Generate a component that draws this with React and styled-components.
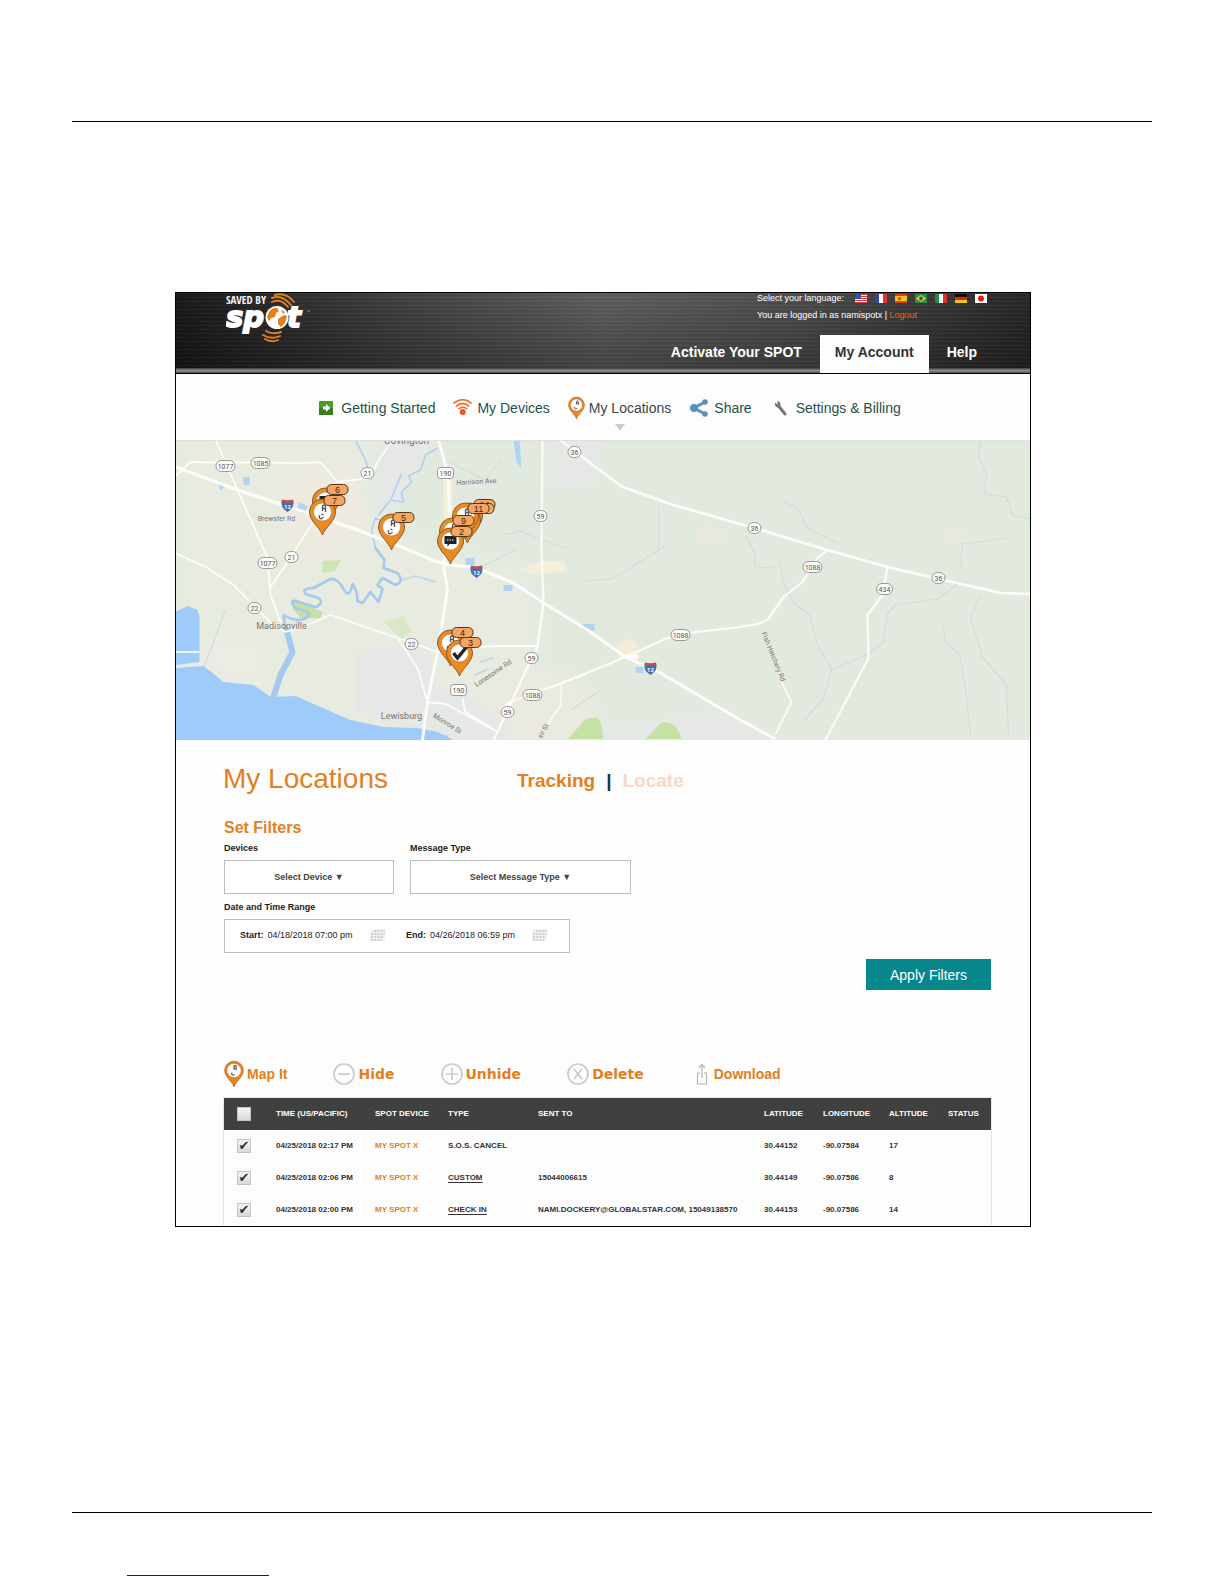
import React from "react";
import styled, { createGlobalStyle, css } from "styled-components";

const orange = "#e2801f";
const sans = `"Liberation Sans", Arial, sans-serif`;

const GlobalStyle = createGlobalStyle`
  *, *::before, *::after { box-sizing: border-box; }
  body { margin: 0; background: #fff; font-family: ${sans}; color: #222; }
  a { text-decoration: none; color: inherit; }
  svg { display: block; }
`;

/* ---------- page ---------- */
const Page = styled.div`
  padding: 121px 72px 8px;
`;
const Rule = styled.hr`
  margin: 0;
  border: 0;
  height: 1px;
  background: #000;
`;
const FooterLine = styled.div`
  width: 142px;
  height: 1px;
  margin: 62px 0 0 55px;
  background: #1a1280;
`;
const Frame = styled.div`
  margin: 170px 121px 285px 103px;
  border: 1px solid #000;
  background: #fdfdfd;
  overflow: hidden;
`;

/* ---------- header ---------- */
const Header = styled.header`
  display: flex;
  justify-content: space-between;
  height: 81px;
  padding: 0 38px 0 50px;
  border-bottom: 1px solid #000;
  background:
    linear-gradient(#3c3c3c, #8d8d8d 50%, #555) bottom / 100% 5px no-repeat,
    repeating-linear-gradient(rgba(255, 255, 255, 0.03) 0 1px, rgba(0, 0, 0, 0.05) 1px 3px, transparent 3px 4px),
    linear-gradient(rgba(0, 0, 0, 0.05), rgba(0, 0, 0, 0.35)),
    linear-gradient(90deg, #1c1c1c, #454545 25%, #666 50%, #555 72%, #2c2c2c);
`;
const HeaderSide = styled.div`
  display: flex;
  flex-direction: column;
  justify-content: space-between;
  align-items: flex-end;
`;
const Account = styled.div`
  display: flex;
  flex-direction: column;
  gap: 7px;
  padding-right: 5px;
  color: #fff;
  font-size: 9px;
  line-height: 10px;
`;
const Languages = styled.div`
  display: flex;
  align-items: center;
  gap: 8px;
`;
const LanguageLabel = styled.span`
  min-width: 90px;
`;
const Flag = styled.button`
  width: 12px;
  height: 9px;
  padding: 0;
  border: 0;
  background: none;
`;
const LogoutLink = styled.a`
  color: #e8641b;
`;
const Tabs = styled.nav`
  display: flex;
  gap: 3px;
`;
const Tab = styled.a`
  height: 38px;
  padding: 0 15px;
  font-size: 14px;
  font-weight: bold;
  line-height: 34px;
  color: ${(p) => (p.$active ? "#333" : "#fff")};
  background: ${(p) => (p.$active ? "#fdfdfd" : "transparent")};
`;

/* ---------- sub navigation ---------- */
const SubNav = styled.nav`
  display: flex;
  justify-content: center;
  align-items: center;
  gap: 18px;
  height: 66px;
  padding: 2px 0 0 12px;
`;
const SubLink = styled.a`
  position: relative;
  display: flex;
  align-items: center;
  gap: 4px;
  font-size: 14px;
  line-height: 24px;
  color: ${(p) => (p.$active ? "#444" : "#24514c")};
  ${(p) =>
    p.$active &&
    css`
      &::after {
        content: "";
        position: absolute;
        left: calc(50% - 5px);
        top: 28px;
        border: 5px solid transparent;
        border-top: 7px solid #ccc;
        border-bottom: 0;
      }
    `}
`;
const MapBox = styled.div`
  height: 300px;
  svg { width: 100%; height: 100%; }
`;

/* ---------- filters ---------- */
const Main = styled.main`
  padding: 23px 39px 0 48px;
`;
const TitleRow = styled.div`
  display: flex;
  align-items: center;
  margin-left: -1px;
`;
const Title = styled.h1`
  width: 294px;
  margin: 0;
  font-size: 28px;
  font-weight: normal;
  line-height: 32px;
  color: ${orange};
`;
const Modes = styled.div`
  display: flex;
  gap: 11px;
  padding-top: 4px;
  font-size: 19px;
  font-weight: bold;
  line-height: 24px;
  color: #12353f;
`;
const Mode = styled.a`
  color: ${(p) => (p.$muted ? "#f6d9c6" : orange)};
`;
const Filters = styled.form`
  display: flex;
  flex-direction: column;
`;
const SubTitle = styled.h2`
  margin: 23px 0 4px;
  font-size: 16px;
  line-height: 20px;
  color: ${orange};
`;
const FilterRow = styled.div`
  display: flex;
  gap: 16px;
  margin-bottom: 7px;
`;
const Field = styled.div`
  display: flex;
  flex-direction: column;
  gap: 6px;
  width: ${(p) => p.$width}px;
`;
const Label = styled.label`
  font-size: 9px;
  font-weight: bold;
  line-height: 12px;
  color: #1c1c1c;
`;
const Select = styled.select`
  appearance: none;
  height: 34px;
  border: 1px solid #bdbdbd;
  border-radius: 0;
  background: #fff;
  font: bold 9px/12px ${sans};
  color: #444;
  text-align: center;
  text-align-last: center;
`;
const Range = styled.div`
  display: flex;
  align-items: center;
  justify-content: space-between;
  height: 34px;
  padding: 0 19px 2px 15px;
  border: 1px solid #bdbdbd;
  background: #fff;
`;
const DateField = styled.div`
  display: flex;
  align-items: center;
  gap: 4px;
`;
const DateInput = styled.input`
  width: 98px;
  padding: 0;
  border: 0;
  background: none;
  font: 9px/12px ${sans};
  color: #222;
`;
const Apply = styled.button`
  align-self: flex-end;
  width: 125px;
  height: 31px;
  margin-top: -1px;
  padding: 0;
  border: 0;
  background: #07868c;
  font: 14px/32px ${sans};
  color: #fff;
`;

/* ---------- table ---------- */
const Toolbar = styled.div`
  display: flex;
  align-items: center;
  gap: 46px;
  height: 28px;
  margin: 70px 0 10px;
`;
const Action = styled.button`
  display: flex;
  align-items: center;
  gap: 3px;
  padding: 0;
  border: 0;
  background: none;
  font: bold 14px/18px ${(p) => (p.$wide ? `"DejaVu Sans", Verdana, sans-serif` : sans)};
  color: ${orange};
`;
const Table = styled.table`
  width: 100%;
  table-layout: fixed;
  border-collapse: collapse;
  box-shadow: 0 0 0 1px #e6e6e6;
  font-size: 8px;
  font-weight: bold;
  color: #333;
`;
const Col = styled.col`
  width: ${(p) => (p.$width ? `${p.$width}px` : "auto")};
`;
const Row = styled.tr`
  height: 32px;
  background: ${(p) => (p.$head ? "#404040" : "transparent")};
  color: ${(p) => (p.$head ? "#fff" : "inherit")};
`;
const cell = css`
  padding: 0;
  text-align: left;
  white-space: nowrap;
  line-height: 12px;
`;
const Th = styled.th`
  ${cell}
`;
const Td = styled.td`
  ${cell}
  color: ${(p) => (p.$accent ? orange : "inherit")};
`;
const TypeLink = styled.a`
  text-decoration: underline;
  text-underline-offset: 2px;
`;
const Check = styled.input`
  appearance: none;
  display: grid;
  place-items: center;
  width: 14px;
  height: 14px;
  margin: 0 0 0 13px;
  border: 1px solid #c4c4c4;
  background: linear-gradient(#f3f3f3, #dadada);
  &:checked::before {
    content: "✔";
    font: 13px/12px "DejaVu Sans", sans-serif;
    color: #333;
  }
`;

/* ---------- drawings ---------- */
function Logo() {
  return (
    <svg width="86" height="51" viewBox="0 0 86 51" role="img" aria-label="Saved by Spot">
      <g fill="none" stroke={orange} strokeWidth="1.9" strokeLinecap="round">
        <path d="M46 5Q56 1 65 12M49 2Q60 -1 68 9M46 9Q55 5 62 14" />
        <path d="M37 42Q45 47 54 43M39 46Q45 50 52 47M40 38Q46 42 55 39" />
      </g>
      <text x="0" y="11" fill="#f4f4f4" fontSize="11" fontWeight="bold" fontFamily="'Liberation Sans Narrow', 'Open Sans Condensed', 'Open Sans', sans-serif">
        SAVED BY
      </text>
      <g fill="#fff" stroke="#fff" strokeWidth="1.8" fontFamily="'DejaVu Sans', Verdana, sans-serif" fontSize="29" fontWeight="bold" fontStyle="italic">
        <text x="0" y="34">sp</text>
        <text x="61" y="34">t</text>
      </g>
      <circle cx="51" cy="24.500" r="11.500" fill="#fff" />
      <path d="M43 19q4-5 8-4l2 3-3 2-1 4-4 1-2 3-2-4zM52 26l6-4 3 1-2 7-4 4-3-3zM55 17l4 2-2 2z" fill={orange} />
      <text x="80" y="20" fontSize="4" fill="#aaa" fontFamily={sans}>™</text>
    </svg>
  );
}

const flags = [
  ["English", <><path fill="#eee" d="M0 0h12v9H0z" /><path stroke="#d0404a" strokeWidth="1" d="M0 .5h12M0 2.500h12M0 4.500h12M0 6.500h12M0 8.500h12" /><path fill="#3d4f9c" d="M0 0h6v5H0z" /></>],
  ["Français", <><path fill="#fff" d="M0 0h12v9H0z" /><path fill="#33479b" d="M0 0h4v9H0z" /><path fill="#e0332e" d="M8 0h4v9H8z" /></>],
  ["Español", <><path fill="#f5c31c" d="M0 0h12v9H0z" /><path fill="#d8402a" d="M0 0h12v2H0zM0 7h12v2H0zM3 3.500h3v2.500H3z" /></>],
  ["Português", <><path fill="#2a9140" d="M0 0h12v9H0z" /><path fill="#f0d42c" d="M6 1l5 3.500L6 8 1 4.500z" /><circle cx="6" cy="4.500" r="2" fill="#2f4f94" /></>],
  ["Italiano", <><path fill="#fff" d="M0 0h12v9H0z" /><path fill="#228a43" d="M0 0h4v9H0z" /><path fill="#d8342f" d="M8 0h4v9H8z" /></>],
  ["Deutsch", <><path fill="#111" d="M0 0h12v3H0z" /><path fill="#d8281c" d="M0 3h12v3H0z" /><path fill="#f3c518" d="M0 6h12v3H0z" /></>],
  ["日本語", <><path fill="#fff" d="M0 0h12v9H0z" /><circle cx="6" cy="4.500" r="3" fill="#e01d1d" /></>],
];

/* Origin is the centre of the pin's head; the tip sits 23 units below. */
function PinShape({ kind = "spot" }) {
  return (
    <>
      <path d="M0 23C-2 16 -13 9 -13 0a13 13 0 0 1 26 0C13 9 2 16 0 23z" fill="#ea8a22" stroke="#8b5a22" strokeWidth="1" />
      <circle r="9" fill="#fff" stroke="#b9793a" strokeWidth=".6" />
      {kind === "spot" && (
        <g fill="none" stroke="#555" strokeWidth="1.300">
          <path d="M0-1V-6q2-2 3 0V0M0-3.500h3" />
          <path d="M-3 3v3q2 2 4-1M-1 2l2 1" />
        </g>
      )}
      {kind === "message" && (
        <>
          <path d="M-6-5H6V3H-1L-3 6V3H-6z" fill="#222" />
          <path d="M-3.500-1h7" stroke="#fff" strokeWidth="1.200" strokeDasharray="1.500 1" />
        </>
      )}
      {kind === "check" && <path d="M-6 0L-2 5 7-6" fill="none" stroke="#262626" strokeWidth="3.500" />}
    </>
  );
}

function PinIcon({ width, height }) {
  return (
    <svg width={width} height={height} viewBox="-14 -14 28 38" aria-hidden="true">
      <path d="M0 23C-2 16 -13 9 -13 0a13 13 0 0 1 26 0C13 9 2 16 0 23z" fill="#e5842a" stroke="#a8641f" />
      <circle r="9.500" fill="#fff" />
      <path d="M0-1V-6q2-2 3 0V0M0-3h3M-3 3v3q2 2 4-1" fill="none" stroke="#555" strokeWidth="1.600" />
    </svg>
  );
}

const pins = [
  { x: 150, y: 61, badge: [152, 44, "6"], kind: "message" },
  { x: 147, y: 72, badge: [149, 55, "7"] },
  { x: 216, y: 87, badge: [218, 72, "5"] },
  { x: 294, y: 76, badge: [299, 59, "14"] },
  { x: 292, y: 80, badge: [298, 63, "13"] },
  { x: 290, y: 76, badge: [293, 63, "11"] },
  { x: 277, y: 91, badge: [278, 75, "9"] },
  { x: 275, y: 101, badge: [276, 86, "2"], kind: "message" },
  { x: 275, y: 203, badge: [277, 187, "4"] },
  { x: 284, y: 213, badge: [285, 197, "3"], kind: "check" },
];

const shields = [
  [50, 26, "1077"], [85, 23, "1085"], [192, 33, "21"], [270, 33, "190"], [92, 123, "1077"], [116, 117, "21"],
  [79, 168, "22"], [236, 204, "22"], [399, 12, "36"], [365, 76, "59"], [356, 218, "59"], [357, 255, "1088"],
  [332, 272, "59"], [283, 250, "190"], [505, 195, "1088"], [579, 88, "36"], [637, 127, "1088"], [709, 149, "434"],
  [763, 138, "36"],
];

const interstates = [[112, 65], [301, 131], [475, 228]];

function LocationMap() {
  return (
    <svg viewBox="0 0 855 300" preserveAspectRatio="xMidYMid slice" role="img" aria-label="Map of locations">
      <defs>
        <filter id="soft" x="-20%" y="-20%" width="140%" height="140%"><feGaussianBlur stdDeviation="7" /></filter>
      </defs>
      <rect width="855" height="300" fill="#e2eadf" />
      <g filter="url(#soft)">
        <path d="M0 0H200L190 60 260 110 360 130 362 215 330 300H0z" fill="#e7ebe0" />
        <path d="M120 30h60l10 60-40 30-50-20z" fill="#efeae0" />
        <path d="M330 220l70 20 20 30-30 30h-80z" fill="#ebeae0" />
        <path d="M30 200h60v40H40z" fill="#ebece4" />
      </g>
      <g fill="#e6e8e6">
        <path d="M205 0H250L240 30 228 50 215 78 200 70 203 30z" />
        <path d="M371 0h54v42l-40 6-14-4z" />
        <path d="M180 212l70-8 12 40 30 12 45 30-10 14H250l-70-30z" />
        <path d="M545 272l55 27H390l40-14z" />
      </g>
      <g fill="#f3efd8">
        <path d="M342 130l25-9 22 0 2 10-26 4z" />
        <path d="M268 36h9v42h-9z" />
      </g>
      <path d="M443 205q12-12 18 0l1 14-18-2z" fill="#f4ecd4" />
      <ellipse cx="535" cy="95" rx="15" ry="9" fill="#e8e8de" />
      <ellipse cx="777" cy="94" rx="10" ry="7" fill="#e7e9de" />
      <g fill="#c5e2a3">
        <path d="M392 299l13-14q4-8 11-7 8-2 10 8l2 13z" />
        <path d="M470 299l9-9q6-10 14-7 8 0 13 16z" />
        <path d="M117 161l10 2 20 9-2 6-20 0-8-10z" />
        <path d="M147 121l19-1-7 11-12 2z" opacity=".7" />
        <path d="M208 182l20-6 8 16-10 6z" opacity=".45" />
      </g>

      <g fill="none" stroke="#d1dddd" strokeWidth="1.200">
        <path d="M571 95l8 18 1 14 18 1M608 62l14 6 10 20 30 15M605 125l3 18 10 20 16 12 8 30 14 24-8 30-20 22M655 230l38-16 15-12 4-28 10-12M805 0l-2 16 8 20-2 18 22 3 6 18 18 4M785 130l2-26 45-6M768 188l2 14 14 12 6 36 5 46M805 155l-10 22 12 40 24 28 2 50M722 165l40-6 20-15M407 141l30-2 40-25 12-8M330 95l14-4 20 8 30 10M20 250l30-80M270 20l40 20 15-20M395 270l30-20" />
        <path d="M483 68v42M340 110l-40 20" />
      </g>

      <g fill="#9fcbfb">
        <path d="M0 172L12 166 22 170 24 177V222L0 225z" />
        <path d="M0 228L28 226 36 232 48 242 78 245 95 257 120 256 145 267 175 280 208 287 242 288 262 292 278 300H0z" />
        <path d="M68 37h6v8h-6zM43 44l6 3-4 3zM124 62l8 4-3 8-8-3zM290 118h9v7h-9zM328 145h9v6h-9zM407 184h12v7l-12-2zM460 227h8v6h-8zM338 0h6l2 28-5-6zM258 295h14v5h-14z" opacity=".75" />
      </g>
      <g fill="none" stroke="#a5c8f0" strokeLinejoin="round" strokeLinecap="round">
        <path d="M111 190L117 212 105 235 97 260" strokeWidth="6" />
        <path d="M110 190L108 175Q120 182 128 179T132 172L120 168Q113 160 120 161L140 167Q149 163 143 158L130 154Q126 148 138 148L155 139Q162 138 168 149T177 144Q182 150 182 161L187 163 195 152 203 162 207 149 202 145 207 138 220 145Q229 142 222 133L208 128 209 120 200 108" strokeWidth="2.600" />
        <path d="M200 108L196 90 200 78 208 82M203 75L215 60 228 62 226 52 236 42 233 36 245 30 250 15 262 8M216 58l10-24M180 0l10 20 6 20" strokeWidth="1.600" opacity=".8" />
        <path d="M226 140l14-4 20 6M300 235l12-6M305 222l12-4" strokeWidth="1.800" opacity=".6" />
      </g>

      <g fill="none" stroke="#fcfdfa" strokeWidth="1.800" strokeLinejoin="round">
        <path d="M0 27L62 50 132 73 177 88 228 108 262 122 275 125 302 128 338 143 368 163 412 190 450 217 485 233 565 280 600 299" strokeWidth="3" />
        <path d="M385 0L420 27 447 47 498 65 565 84 652 110 712 127 768 140 825 153 855 154" strokeWidth="2.500" />
        <path d="M367 0L366 112 368 162 362 207 353 225 322 292 318 300" strokeWidth="2.200" />
        <path d="M325 270L333 263 358 253 382 245 450 217 492 198 520 192 565 187 582 184 592 180 608 157 627 142 642 118 652 110" strokeWidth="2.200" />
        <path d="M712 127L707 155 692 175 693 218 672 258 650 300" strokeWidth="2.200" />
        <path d="M263 0L272 32 274 72 268 125 272 150 262 212 252 262 247 300" strokeWidth="2.800" />
        <path d="M40 0L63 52 92 118 95 155 105 182" />
        <path d="M0 36L15 22 128 23 145 22 162 42 195 38 202 22 217 0" />
        <path d="M95 147L110 125 137 83" />
        <path d="M0 113L32 128 58 145 95 182 110 192 130 186 155 175 222 198 262 212 290 208 320 206H362M222 198L242 228 252 262" />
        <path d="M287 258L290 272 322 292M252 262L270 264 322 292" />
        <path d="M605 240L616 262 600 294M386 245L385 265 372 285M0 212H24" opacity=".8" />
      </g>
      <path d="M445 217h18" stroke="#fff" strokeWidth="4" />

      <g fontFamily="Roboto, sans-serif" fill="#757575" fontSize="7">
        <text x="231" y="4" textAnchor="middle" fontSize="10">Covington</text>
        <text x="106" y="189" textAnchor="middle" fontSize="9">Madisonville</text>
        <text x="226" y="279" textAnchor="middle" fontSize="9">Lewisburg</text>
        <text x="101" y="81" textAnchor="middle">Brewster Rd</text>
        <text x="301" y="44" textAnchor="middle" transform="rotate(-3 301 44)">Harrison Ave</text>
        <text x="257" y="277" transform="rotate(32 257 277)">Monroe St</text>
        <text x="301" y="247" transform="rotate(-34 301 247)">Lonesome Rd</text>
        <text x="586" y="193" transform="rotate(68 586 193)">Fish Hatchery Rd</text>
        <text x="366" y="299" transform="rotate(-62 366 299)">sir St</text>
      </g>
      <g fontFamily="Roboto, sans-serif" fontSize="7" fill="#555" textAnchor="middle">
        {shields.map(([x, y, n]) => {
          const w = n.length * 3 + 7;
          return (
            <g key={`${x}-${y}`}>
              <rect x={x - w / 2} y={y - 5.5} width={w} height="11" rx={n === "190" ? 3 : 5.5} fill="#fbfbf8" stroke="#8d8d8d" strokeWidth=".9" />
              <text x={x} y={y + 2.5}>{n}</text>
            </g>
          );
        })}
      </g>
      <g fontFamily="Roboto, sans-serif" fontSize="6" fontWeight="bold" fill="#fff" textAnchor="middle">
        {interstates.map(([x, y]) => (
          <g key={x} transform={`translate(${x} ${y})`}>
            <path d="M-5.500-5Q-8 2 0 7 8 2 5.500-5 0-3-5.500-5z" fill="#3f6fb5" />
            <path d="M-5.500-5.500Q0-4 5.500-5.500L6-2.500H-6z" fill="#cf4a4a" />
            <text y="3.500">12</text>
          </g>
        ))}
      </g>

      {pins.map(({ x, y, kind, badge: [bx, by, n] }) => (
        <g key={n}>
          <g transform={`translate(${x} ${y})`}><PinShape kind={kind} /></g>
          <rect x={bx - 0.5} y={by + 0.5} width="21" height="10" rx="4.500" fill="#f3a765" stroke="#5a3413" />
          <text x={bx + 10} y={by + 8.5} textAnchor="middle" fontFamily={sans} fontSize="9" fill="#3a2410">{n}</text>
        </g>
      ))}
      <path d="M0 .5H855" stroke="#dfe2da" />
    </svg>
  );
}

const ArrowIcon = () => (
  <svg width="20" height="16" viewBox="0 0 20 16" aria-hidden="true">
    <rect x="2" y="1" width="14" height="14" rx="1" fill="#4c9a2a" />
    <rect x="2" y="8" width="14" height="7" fill="#3a7d20" />
    <path d="M6 6.500h3V4l4.500 4L9 12V9.500H6z" fill="#fff" />
  </svg>
);
const SignalIcon = () => (
  <svg width="20" height="18" viewBox="0 0 20 18" aria-hidden="true">
    <g fill="none" stroke="#e5753b" strokeWidth="1.700" strokeLinecap="round">
      <path d="M1 4Q10-2.500 18 4M3.500 7Q10 2 15.500 7M6 9.700Q10 6.500 13.500 9.700" />
    </g>
    <circle cx="9.700" cy="13" r="3" fill="#e8562b" />
  </svg>
);
const ShareIcon = () => (
  <svg width="21" height="18" viewBox="0 0 21 18" aria-hidden="true">
    <path d="M16 3L5 9l11 6" fill="none" stroke="#5d8fbe" strokeWidth="3" />
    <circle cx="5" cy="9" r="4" fill="#5d8fbe" />
    <circle cx="16" cy="3" r="2.800" fill="#5d8fbe" />
    <circle cx="16" cy="15" r="2.800" fill="#5d8fbe" />
  </svg>
);
const WrenchIcon = () => (
  <svg width="22" height="16" viewBox="0 0 22 16" aria-hidden="true">
    <path d="M9 6.500L15 14" stroke="#777" strokeWidth="3" strokeLinecap="round" />
    <path d="M5 2.500q-1 4 3 5.200L10.500 5.500Q11 1.500 7.500 1V4.500z" fill="#777" />
  </svg>
);
const CalendarIcon = () => (
  <svg width="18" height="14" viewBox="0 0 18 14" aria-hidden="true">
    <path d="M0 1h15v12H0z" fill="#f1f1f1" />
    <path d="M4 3h11M1 6h14M1 9h13M1 12h11" stroke="#d2d2d2" strokeWidth="2" strokeDasharray="2.200 1" />
  </svg>
);
const CircleIcon = ({ d }) => (
  <svg width="22" height="22" viewBox="0 0 22 22" fill="none" stroke="#cbcbcb" strokeWidth="1.700" aria-hidden="true">
    <circle cx="11" cy="11" r="10" />
    <path d={d} />
  </svg>
);
const ExportIcon = () => (
  <svg width="21" height="22" viewBox="0 0 21 22" fill="none" stroke="#b5b5b5" strokeWidth="1.200" aria-hidden="true">
    <path d="M10 10H7.500v11h9V10H14M12 15V2M9 5l3-3.500L15 5" />
  </svg>
);

const columns = [
  ["Time", "TIME (US/PACIFIC)", 99], ["Device", "SPOT DEVICE", 73], ["Type", "TYPE", 90], ["Sent", "SENT TO", null],
  ["Lat", "LATITUDE", 59], ["Lng", "LONGITUDE", 66], ["Alt", "ALTITUDE", 59], ["Status", "STATUS", 43],
];
const rows = [
  { time: "04/25/2018 02:17 PM", type: "S.O.S. CANCEL", sent: "", lat: "30.44152", lng: "-90.07584", alt: "17" },
  { time: "04/25/2018 02:06 PM", type: "CUSTOM", link: true, sent: "15044006615", lat: "30.44149", lng: "-90.07586", alt: "8" },
  { time: "04/25/2018 02:00 PM", type: "CHECK IN", link: true, sent: "NAMI.DOCKERY@GLOBALSTAR.COM, 15049138570", lat: "30.44153", lng: "-90.07586", alt: "14" },
];

export default function App() {
  return (
    <Page>
      <GlobalStyle />
      <Rule />
      <Frame>
        <Header>
          <Logo />
          <HeaderSide>
            <Account>
              <Languages>
                <LanguageLabel>Select your language:</LanguageLabel>
                {flags.map(([name, art]) => (
                  <Flag key={name} type="button" aria-label={name}>
                    <svg width="12" height="9" viewBox="0 0 12 9">{art}</svg>
                  </Flag>
                ))}
              </Languages>
              <div>You are logged in as namispotx | <LogoutLink href="#logout">Logout</LogoutLink></div>
            </Account>
            <Tabs>
              <Tab href="#activate">Activate Your SPOT</Tab>
              <Tab href="#account" $active>My Account</Tab>
              <Tab href="#help">Help</Tab>
            </Tabs>
          </HeaderSide>
        </Header>

        <SubNav>
          <SubLink href="#start"><ArrowIcon />Getting Started</SubLink>
          <SubLink href="#devices"><SignalIcon />My Devices</SubLink>
          <SubLink href="#locations" $active><PinIcon width={17} height={24} />My Locations</SubLink>
          <SubLink href="#share"><ShareIcon />Share</SubLink>
          <SubLink href="#settings"><WrenchIcon />Settings &amp; Billing</SubLink>
        </SubNav>

        <MapBox><LocationMap /></MapBox>

        <Main>
          <TitleRow>
            <Title>My Locations</Title>
            <Modes>
              <Mode href="#tracking">Tracking</Mode>
              <span>|</span>
              <Mode href="#locate" $muted>Locate</Mode>
            </Modes>
          </TitleRow>

          <Filters onSubmit={(e) => e.preventDefault()}>
            <SubTitle>Set Filters</SubTitle>
            <FilterRow>
              <Field $width={170}>
                <Label htmlFor="device">Devices</Label>
                <Select id="device"><option>Select Device ▼</option></Select>
              </Field>
              <Field $width={221}>
                <Label htmlFor="message">Message Type</Label>
                <Select id="message"><option>Select Message Type ▼</option></Select>
              </Field>
            </FilterRow>
            <FilterRow>
              <Field $width={346} role="group" aria-labelledby="range">
                <Label as="span" id="range">Date and Time Range</Label>
                <Range>
                  <DateField>
                    <Label htmlFor="start">Start:</Label>
                    <DateInput id="start" defaultValue="04/18/2018 07:00 pm" />
                    <CalendarIcon />
                  </DateField>
                  <DateField>
                    <Label htmlFor="end">End:</Label>
                    <DateInput id="end" defaultValue="04/26/2018 06:59 pm" />
                    <CalendarIcon />
                  </DateField>
                </Range>
              </Field>
            </FilterRow>
            <Apply type="submit">Apply Filters</Apply>
          </Filters>

          <Toolbar>
            <Action type="button"><PinIcon width={20} height={28} />Map It</Action>
            <Action type="button" $wide><CircleIcon d="M5 11h12" />Hide</Action>
            <Action type="button" $wide><CircleIcon d="M5 11h12M11 5v12" />Unhide</Action>
            <Action type="button" $wide><CircleIcon d="M7 6l8 10M15 6L7 16" />Delete</Action>
            <Action type="button"><ExportIcon />Download</Action>
          </Toolbar>

          <Table>
            <colgroup>
              <Col $width={52} />
              {columns.map(([key, , width]) => <Col key={key} $width={width} />)}
            </colgroup>
            <thead>
              <Row $head>
                <Th><Check type="checkbox" aria-label="Select all" /></Th>
                {columns.map(([key, label]) => <Th key={key} scope="col">{label}</Th>)}
              </Row>
            </thead>
            <tbody>
              {rows.map((row) => (
                <Row key={row.time}>
                  <Td><Check type="checkbox" defaultChecked aria-label={`Select ${row.time}`} /></Td>
                  <Td>{row.time}</Td>
                  <Td $accent>MY SPOT X</Td>
                  <Td>{row.link ? <TypeLink href="#message">{row.type}</TypeLink> : row.type}</Td>
                  <Td>{row.sent}</Td>
                  <Td>{row.lat}</Td>
                  <Td>{row.lng}</Td>
                  <Td>{row.alt}</Td>
                  <Td />
                </Row>
              ))}
            </tbody>
          </Table>
        </Main>
      </Frame>
      <Rule />
      <FooterLine />
    </Page>
  );
}
